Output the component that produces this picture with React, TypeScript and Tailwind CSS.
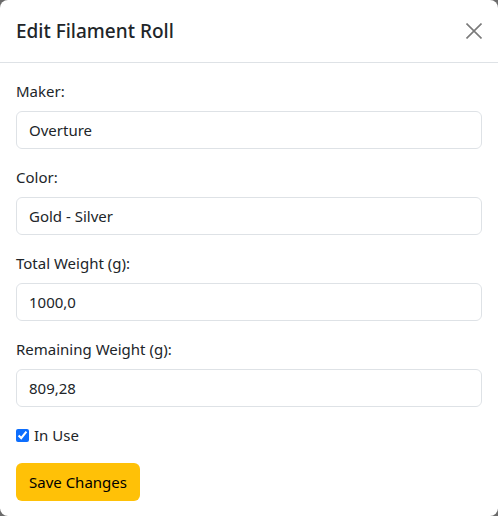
const fields = [
  { label: 'Maker:', value: 'Overture' },
  { label: 'Color:', value: 'Gold - Silver' },
  { label: 'Total Weight (g):', value: '1000,0' },
  { label: 'Remaining Weight (g):', value: '809,28' },
];

const App = () => {
  return (
    <div className="w-[498px] h-[516px] bg-[#6b6b6b] font-['Noto_Sans',sans-serif] text-[#212529]">
      <div className="w-full h-full bg-white rounded-lg overflow-hidden flex flex-col">
        <div className="h-[63px] shrink-0 flex items-center justify-between px-4 border-b border-[#dee2e6]">
          <h5 className="text-[19px] font-medium leading-6">Edit Filament Roll</h5>
          <button className="w-4 h-4 flex items-center justify-center text-[#7a7a7a]">
            <svg width="16" height="16" viewBox="0 0 16 16" fill="none" stroke="currentColor" strokeWidth="1.6">
              <path d="M0.5 0.5 L15.5 15.5 M15.5 0.5 L0.5 15.5" />
            </svg>
          </button>
        </div>
        <div className="p-4 flex flex-col">
          {fields.map((f) => (
            <div key={f.label} className="mb-4">
              <label className="block text-[15px] leading-6 mb-2">{f.label}</label>
              <input
                defaultValue={f.value}
                className="w-full h-[38px] px-3 border border-[#dee2e6] rounded-md text-[15px] text-[#212529] outline-none"
              />
            </div>
          ))}
          <div className="flex items-center h-6 mb-4 text-[15px]">
            <input type="checkbox" defaultChecked className="w-[13px] h-[13px] m-0 mr-[5px] accent-[#0d6efd]" />
            <span>In Use</span>
          </div>
          <div>
            <button className="h-[38px] px-[13px] bg-[#ffc107] rounded-md text-[15px] text-black">Save Changes</button>
          </div>
        </div>
      </div>
    </div>
  );
};

export default App;
